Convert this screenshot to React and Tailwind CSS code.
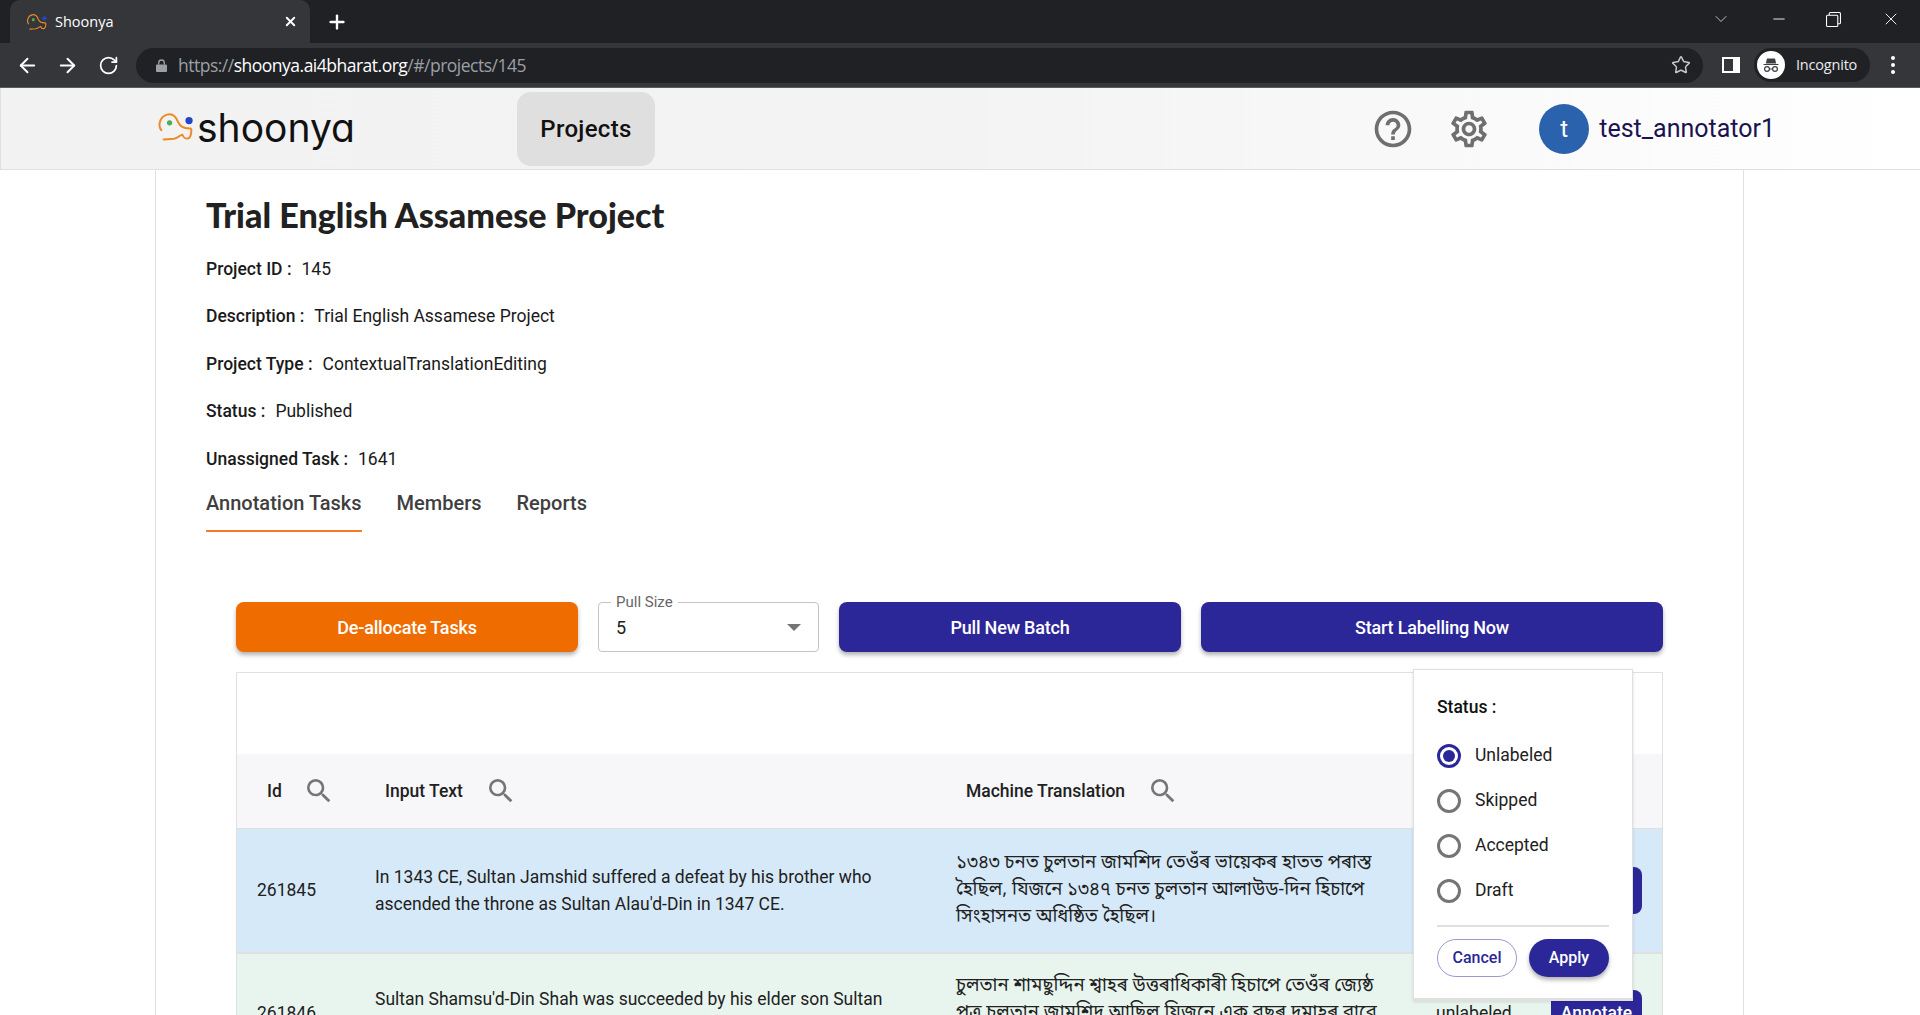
import React from "react";
import { ArrowLeft, ArrowRight, RotateCw, Plus, X, ChevronDown, Minus, Star } from "lucide-react";
import { MdSearch, MdHelpOutline, MdOutlineSettings } from "react-icons/md";

function Fav({ className }) {
  return (
    <svg viewBox="20 75 115 95" className={className} fill="none">
      <path d="M33 132 C22 118 28 92 50 85 C68 80 78 92 84 108 C90 122 104 128 122 127" stroke="#ed8a24" strokeWidth="6" strokeLinecap="round" />
      <path d="M40 160 L72 158 C84 156 90 146 97 146 C102 160 124 168 124 130" stroke="#ed8a24" strokeWidth="6" strokeLinecap="round" />
      <circle cx="58" cy="110" r="8" fill="#4caf50" />
      <circle cx="117" cy="103" r="11" fill="#2546c4" />
    </svg>
  );
}

function Radio({ label, on }) {
  return (
    <div className="flex items-center h-[45px] gap-[14px]">
      <span className={`w-6 h-6 rounded-full border-[3px] flex items-center justify-center ${on ? "border-[#2c2799]" : "border-[#757575]"}`}>
        {on && <span className="w-3 h-3 rounded-full bg-[#2c2799]" />}
      </span>
      <span className="text-[17.5px] text-[#212121]">{label}</span>
    </div>
  );
}

function Info({ k, v }) {
  return (
    <div className="h-[47.5px] flex items-center text-[17.5px] text-[#1a1a1a]">
      <span className="font-medium mr-[10px]">{k} :</span>
      <span>{v}</span>
    </div>
  );
}

const bn = "font-['Noto_Sans_Bengali','Lohit_Bengali','Noto_Sans',sans-serif]";

function Row({ bg, id, en, as, h }) {
  return (
    <div className={`grid grid-cols-[139px_580px_480px_1fr] items-center ${h} ${bg}`}>
      <div className="pl-[20px] text-[17.5px] text-[#212121]">{id}</div>
      <div className="text-[17.5px] leading-[27px] text-[#212121] pr-[70px] -ml-[1px]">{en}</div>
      <div className={`text-[18.5px] leading-[27px] text-[#212121] pr-[40px] ${bn}`}>{as}</div>
      <div className="flex items-center pr-[20px] justify-between text-[17.5px] text-[#212121]">
        <span>unlabeled</span>
        <button className="w-[91px] h-[47px] rounded-r-[8px] bg-[#2c2799] text-white font-medium text-[17.5px]">Annotate</button>
      </div>
    </div>
  );
}

export default function App() {
  return (
    <div className="relative h-screen w-full overflow-hidden bg-white font-['Roboto',sans-serif]">
      {/* browser chrome */}
      <div className="h-[43px] bg-[#202124] flex items-end pl-[10px] text-white">
        <div className="w-[300px] h-[43px] bg-[#35363a] rounded-t-[10px] flex items-center pl-[16px] pr-[12px]">
          <Fav className="w-[22px] h-[18px] mr-[7px]" />
          <span className="text-[14.5px] flex-1 font-['Open_Sans',sans-serif]">Shoonya</span>
          <X size={15} strokeWidth={3} className="text-white" />
        </div>
        <div className="h-[43px] flex items-center ml-[16px]">
          <Plus size={22} strokeWidth={2.6} />
        </div>
        <div className="flex-1" />
        <div className="h-[38px] self-start flex items-center">
          <ChevronDown size={20} strokeWidth={1} className="mr-[39px] text-[#dadce0]" />
          <Minus size={18} strokeWidth={1.2} className="mr-[38px]" />
          <svg viewBox="0 0 14 14" className="w-[15px] h-[15px] mr-[40px]" fill="none" stroke="white" strokeWidth="1">
            <rect x="0.5" y="3" width="10.5" height="10.5" rx="1" />
            <path d="M3 3 V1.5 a1 1 0 0 1 1 -1 h8.5 a1 1 0 0 1 1 1 V10 a1 1 0 0 1 -1 1 H11" />
          </svg>
          <X size={20} strokeWidth={1.1} className="mr-[19px]" />
        </div>
      </div>
      <div className="h-[45px] bg-[#35363a] flex items-center text-white border-b border-[#5a5b5e]">
        <ArrowLeft size={23} strokeWidth={2} className="ml-[16px]" />
        <ArrowRight size={23} strokeWidth={2} className="ml-[17px]" />
        <RotateCw size={21} strokeWidth={2} className="ml-[19px]" />
        <div className="ml-[17px] h-[35px] w-[1567px] rounded-full bg-[#202124] flex items-center pl-[20px] pr-[12px]">
          <svg viewBox="0 0 12 14" className="w-[11px] h-[13px] mr-[11px]" fill="#9aa0a6">
            <path d="M1 6h10a1 1 0 0 1 1 1v6a1 1 0 0 1-1 1H1a1 1 0 0 1-1-1V7a1 1 0 0 1 1-1z" />
            <path d="M3 6V4a3 3 0 0 1 6 0v2" fill="none" stroke="#9aa0a6" strokeWidth="1.5" />
          </svg>
          <span className="text-[17.5px] flex-1 text-[#9aa0a6] font-['Open_Sans',sans-serif] tracking-[-0.5px]">
            https://<span className="text-white">shoonya.ai4bharat.org</span>/#/projects/145
          </span>
          <Star size={20} strokeWidth={1.8} className="text-[#c4c7c5]" />
        </div>
        <svg viewBox="0 0 18 16" className="w-[18px] h-[16px] ml-[19px]">
          <path d="M0 0h18v16H0z" fill="white" />
          <path d="M2 2h9v12H2z" fill="#35363a" />
        </svg>
        <div className="ml-[14px] w-[116px] h-[34px] rounded-full bg-[#202124] flex items-center pl-[3px]">
          <span className="w-[28px] h-[28px] rounded-full bg-white flex items-center justify-center">
            <svg viewBox="0 0 20 20" className="w-[20px] h-[20px]" fill="#3c4043">
              <path d="M6 3.5h8l1.2 5H4.8z" />
              <path d="M2.5 9h15v1h-15z" />
              <circle cx="6" cy="14" r="2.4" fill="none" stroke="#3c4043" strokeWidth="1.2" />
              <circle cx="14" cy="14" r="2.4" fill="none" stroke="#3c4043" strokeWidth="1.2" />
              <path d="M8.4 13.5h3.2v1H8.4z" />
            </svg>
          </span>
          <span className="ml-[11px] text-[14.5px] text-[#e8eaed] font-['Open_Sans',sans-serif] tracking-[-0.2px]">Incognito</span>
        </div>
        <div className="ml-[21px] flex flex-col gap-[3px]">
          <span className="w-[4px] h-[4px] rounded-full bg-white" />
          <span className="w-[4px] h-[4px] rounded-full bg-white" />
          <span className="w-[4px] h-[4px] rounded-full bg-white" />
        </div>
      </div>
      {/* app header */}
      <div className="h-[82px] border-b border-l border-[#e0e0e0] bg-gradient-to-r from-[#f2f2f2] via-[#f3f3f3] to-white flex items-center">
        <div className="ml-[156px] w-[360px] flex items-center">
          <Fav className="w-[38px] h-[32px] mr-[2px] -mt-[4px]" />
          <span className="text-[39px] leading-none text-[#111] font-['Inter',sans-serif] font-normal [font-feature-settings:'cv11'] -mt-[2px]">shoonya</span>
        </div>
        <div className="w-[138px] h-[74px] rounded-[14px] bg-[#dfdfdf] flex items-center justify-center text-[24px] font-medium text-[#111] tracking-[0.3px]">Projects</div>
        <div className="flex-1" />
        <MdHelpOutline size={44} className="text-[#6f6f6f] mr-[32px]" />
        <MdOutlineSettings size={44} className="text-[#6f6f6f] mr-[48px]" />
        <div className="w-[50px] h-[50px] rounded-full bg-[#2a62ad] text-white flex items-center justify-center text-[24px]">t</div>
        <span className="ml-[10px] text-[25px] text-[#1a1350] mr-[145px]">test_annotator1</span>
      </div>
      {/* content */}
      <div className="ml-[155px] w-[1589px] border-x border-[#e0e0e0] pl-[50px] pr-[80px] h-[846px]">
        <h1 className="font-['Lato',sans-serif] font-black text-[34.1px] leading-[44px] text-[#212121] pt-[23px] box-content h-[44px]">Trial English Assamese Project</h1>
        <div className="mt-[8px]">
          <Info k="Project ID" v="145" />
          <Info k="Description" v="Trial English Assamese Project" />
          <Info k="Project Type" v="ContextualTranslationEditing" />
          <Info k="Status" v="Published" />
          <Info k="Unassigned Task" v="1641" />
        </div>
        <div className="flex gap-[35px] text-[20px] font-medium text-[#3f3f3f]">
          <div className="h-[49px] pt-[5px] border-b-2 border-[#f37a28]">Annotation Tasks</div>
          <div className="pt-[5px]">Members</div>
          <div className="pt-[5px]">Reports</div>
        </div>
        <div className="ml-[30px] mt-[70.5px]">
          <div className="flex gap-[20px] h-[50px]">
            <button className="w-[342px] rounded-[8px] bg-[#ee6c00] text-white text-[18px] font-medium shadow-[0_3px_4px_rgba(0,0,0,0.3)] tracking-[-0.2px]">De-allocate Tasks</button>
            <div className="relative w-[221px] rounded-[4px] border border-[#c4c4c4] flex items-center pl-[17px] text-[18px] text-[#212121]">
              <span className="absolute left-[12px] -top-[9px] bg-white px-[5px] text-[15px] leading-[16px] text-[#666]">Pull Size</span>
              <span className="flex-1">5</span>
              <span className="w-0 h-0 mr-[17px] border-x-[7px] border-x-transparent border-t-[7px] border-t-[#757575]" />
            </div>
            <button className="w-[342px] rounded-[8px] bg-[#2c2799] text-white text-[18px] font-medium shadow-[0_3px_4px_rgba(0,0,0,0.3)] tracking-[-0.2px]">Pull New Batch</button>
            <button className="flex-1 rounded-[8px] bg-[#2c2799] text-white text-[18px] font-medium shadow-[0_3px_4px_rgba(0,0,0,0.3)] tracking-[-0.2px]">Start Labelling Now</button>
          </div>
          <div className="mt-[20px] border border-[#e0e0e0]">
            <div className="h-[81px]" />
            <div className="h-[75px] bg-[#f7f7f9] grid grid-cols-[139px_580px_480px_1fr] items-center border-b border-[#e0e0e0] text-[17.5px] font-medium text-[#212121]">
              <div className="pl-[30px] flex items-center"><span className="mr-[21px]">Id</span><MdSearch size={32} className="text-[#757575]" /></div>
              <div className="pl-[9px] flex items-center"><span className="mr-[22px]">Input Text</span><MdSearch size={32} className="text-[#757575]" /></div>
              <div className="pl-[10px] flex items-center"><span className="mr-[22px]">Machine Translation</span><MdSearch size={32} className="text-[#757575]" /></div>
              <div />
            </div>
            <Row
              bg="bg-[#d6e9f8] border-b-2 border-[#e0e0e0]"
              h="h-[125px]"
              id="261845"
              en="In 1343 CE, Sultan Jamshid suffered a defeat by his brother who ascended the throne as Sultan Alau'd-Din in 1347 CE."
              as="১৩৪৩ চনত চুলতান জামশিদ তেওঁৰ ভায়েকৰ হাতত পৰাস্ত হৈছিল, যিজনে ১৩৪৭ চনত চুলতান আলাউড-দিন হিচাপে সিংহাসনত অধিষ্ঠিত হৈছিল।"
            />
            <Row
              bg="bg-[#e8f5ee]"
              h="h-[118px]"
              id="261846"
              en="Sultan Shamsu'd-Din Shah was succeeded by his elder son Sultan Jamshid who ruled for one year and two months."
              as="চুলতান শামছুদ্দিন শ্বাহৰ উত্তৰাধিকাৰী হিচাপে তেওঁৰ জ্যেষ্ঠ পুত্ৰ চুলতান জামশিদ আছিল যিজনে এক বছৰ দুমাহৰ বাবে ৰাজত্ব কৰিছিল।"
            />
          </div>
        </div>
      </div>
      {/* status filter popover */}
      <div className="absolute left-[1413px] top-[669px] w-[220px] h-[332px] bg-white border border-[#e0e0e0] border-b-[3px] shadow-[0_1px_3px_rgba(0,0,0,0.12)] px-[23px] pt-[27px]">
        <div className="text-[17.5px] font-medium text-[#111] leading-[20px] mb-[16px]">Status :</div>
        <Radio label="Unlabeled" on />
        <Radio label="Skipped" />
        <Radio label="Accepted" />
        <Radio label="Draft" />
        <div className="mt-[12px] border-t-2 border-[#e0e0e0] pt-[12px] flex justify-between">
          <button className="w-[80px] h-[38px] rounded-full border border-[#9c98d2] text-[#2c2799] text-[16px] font-medium">Cancel</button>
          <button className="w-[80px] h-[38px] rounded-full bg-[#2c2799] text-white text-[16px] font-medium shadow-[0_3px_4px_rgba(0,0,0,0.3)]">Apply</button>
        </div>
      </div>
    </div>
  );
}
